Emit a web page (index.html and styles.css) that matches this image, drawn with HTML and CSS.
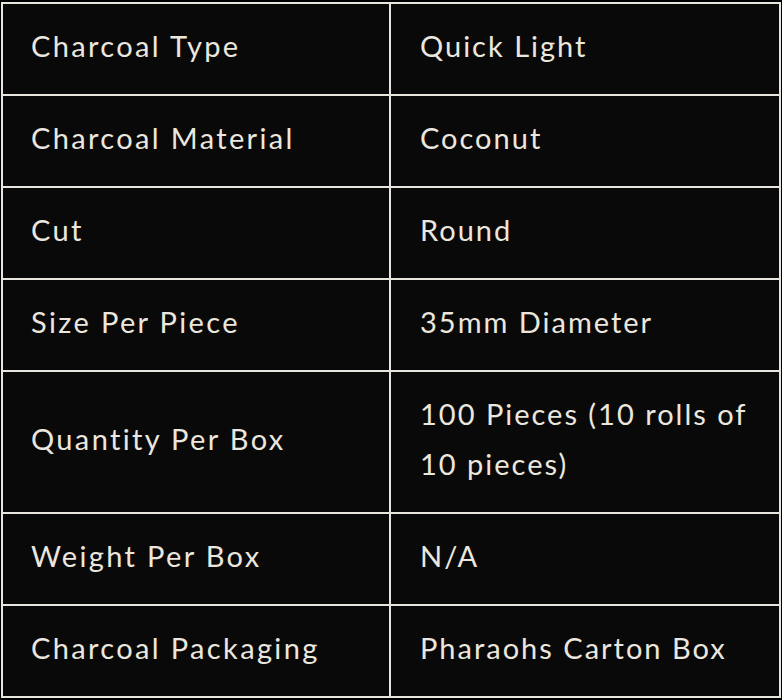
FILE: index.html
```html
<!DOCTYPE html>
<html lang="en">
<head>
<meta charset="utf-8">
<title>Charcoal Specifications</title>
<link rel="stylesheet" href="styles.css">
</head>
<body>
<table class="spec">
  <tbody>
    <tr><td class="label">Charcoal Type</td><td class="value">Quick Light</td></tr>
    <tr><td class="label">Charcoal Material</td><td class="value">Coconut</td></tr>
    <tr><td class="label">Cut</td><td class="value">Round</td></tr>
    <tr><td class="label">Size Per Piece</td><td class="value">35mm Diameter</td></tr>
    <tr><td class="label">Quantity Per Box</td><td class="value">100 Pieces (10 rolls of 10 pieces)</td></tr>
    <tr><td class="label">Weight Per Box</td><td class="value">N/A</td></tr>
    <tr><td class="label">Charcoal Packaging</td><td class="value">Pharaohs Carton Box</td></tr>
  </tbody>
</table>
</body>
</html>
```
FILE: styles.css
```css
html, body {
  margin: 0;
  padding: 0;
  background: #000;
}
body {
  padding: 2px 0 0 1px;
}
.spec {
  width: 780px;
  border-collapse: separate;
  border-spacing: 0;
  border-top: 2px solid #e8e5de;
  border-left: 2px solid #e8e5de;
  table-layout: fixed;
  font-family: "Lato", "Liberation Sans", sans-serif;
  font-size: 29px;
  color: #ebe7df;
}
.spec td {
  background: #0a0909;
  border-right: 2px solid #e8e5de;
  border-bottom: 2px solid #e8e5de;
  line-height: 50px;
  vertical-align: middle;
}
.spec .label {
  width: 330px;
  padding: 17px 28px 23px;
  letter-spacing: 2.35px;
}
.spec .value {
  padding: 17px 14px 23px 29px;
  letter-spacing: 2px;
}
```
